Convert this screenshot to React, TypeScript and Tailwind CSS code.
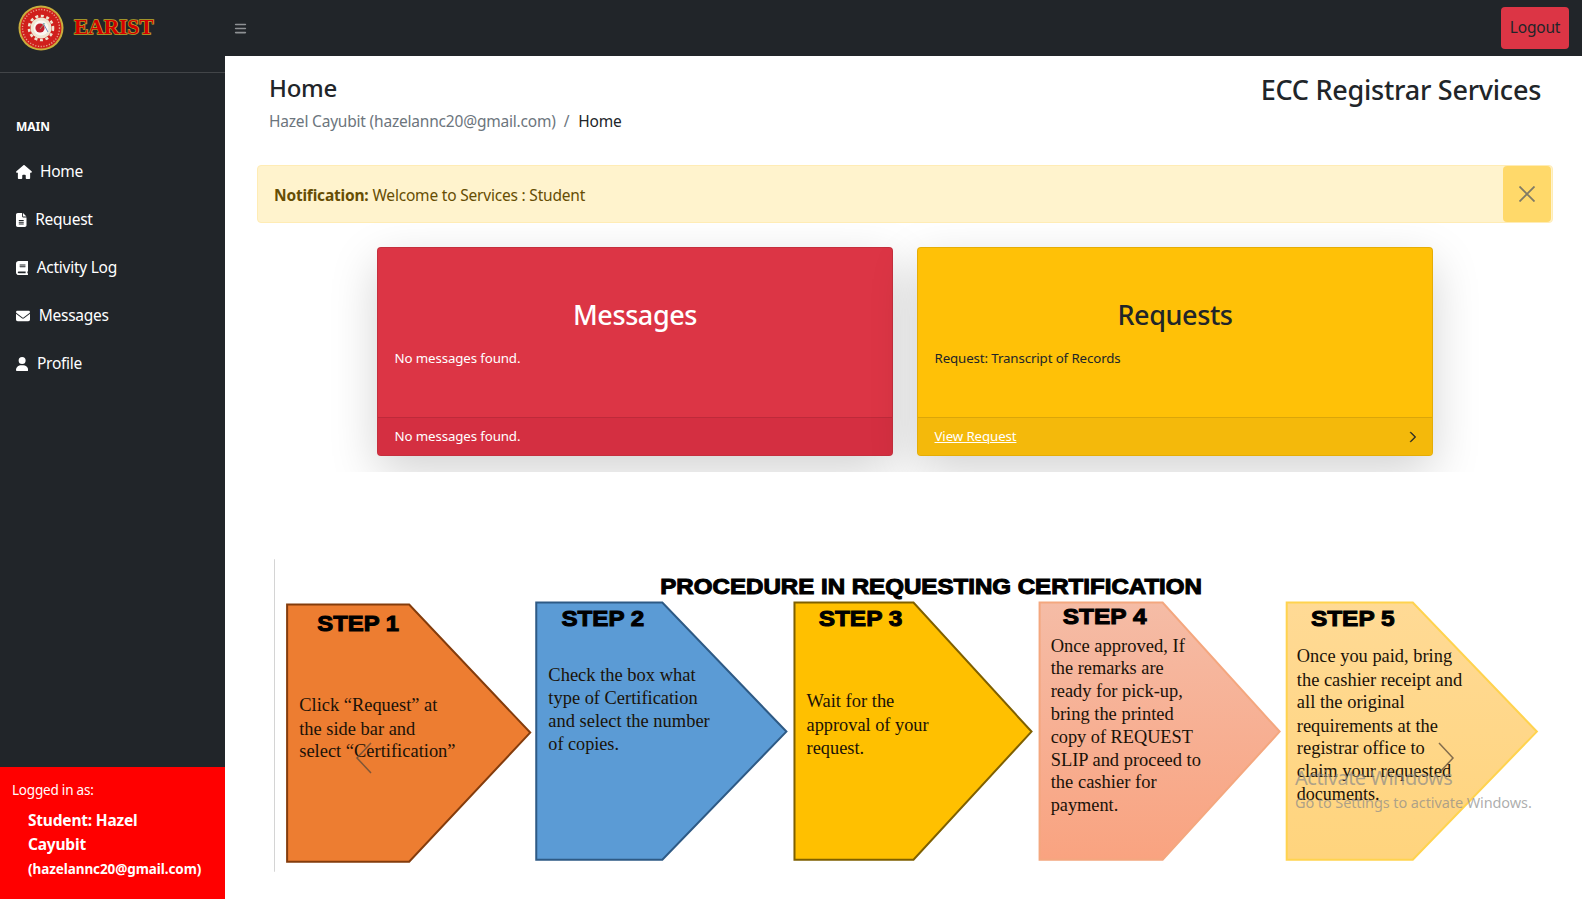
import { FaBars, FaBook, FaEnvelope, FaFileLines, FaHouse, FaUser } from "react-icons/fa6";
import { BsChevronRight } from "react-icons/bs";

const navItems = [
  { label: "Home", icon: FaHouse, iconClass: "w-4 h-3.5", gap: "gap-2" },
  { label: "Request", icon: FaFileLines, iconClass: "w-[10.5px] h-3.5", gap: "gap-[8.7px]" },
  { label: "Activity Log", icon: FaBook, iconClass: "w-[12.25px] h-3.5", gap: "gap-[8.4px]" },
  { label: "Messages", icon: FaEnvelope, iconClass: "w-3.5 h-3.5", gap: "gap-[8.7px]" },
  { label: "Profile", icon: FaUser, iconClass: "w-[12.25px] h-3.5", gap: "gap-[8.7px]" },
];

type Line = [string, number, number, number];

const steps = [
  {
    points: "284,600 405,600 525,727 405,855 284,855",
    fill: "#ed7d31",
    stroke: "#843c0c",
    title: ["STEP 1", 314, 626, 81],
    lines: [
      ["Click “Request” at", 296, 706, 137],
      ["the side bar and", 296, 729, 115],
      ["select “Certification”", 296, 751, 155],
    ] as Line[],
  },
  {
    points: "531,598 656,598 779,726 656,853 531,853",
    fill: "#5b9bd5",
    stroke: "#2e5a85",
    title: ["STEP 2", 556, 621, 82],
    lines: [
      ["Check the box what", 543, 676, 146],
      ["type of Certification", 543, 699, 148],
      ["and select the number", 543, 721, 160],
      ["of copies.", 543, 744, 70],
    ] as Line[],
  },
  {
    points: "787,598 905,598 1022,726 905,853 787,853",
    fill: "#ffc000",
    stroke: "#7f6000",
    title: ["STEP 3", 811, 621, 83],
    lines: [
      ["Wait for the", 799, 702, 87],
      ["approval of your", 799, 725, 121],
      ["request.", 799, 748, 57],
    ] as Line[],
  },
  {
    points: "1030,598 1152,598 1268,726 1152,853 1030,853",
    fill: "url(#step4)",
    stroke: "#f4a77f",
    title: ["STEP 4", 1053, 619, 83],
    lines: [
      ["Once approved, If", 1041, 647, 133],
      ["the remarks are", 1041, 669, 112],
      ["ready for pick-up,", 1041, 692, 131],
      ["bring the printed", 1041, 714, 122],
      ["copy of REQUEST", 1041, 737, 141],
      ["SLIP and proceed to", 1041, 760, 149],
      ["the cashier for", 1041, 782, 105],
      ["payment.", 1041, 805, 67],
    ] as Line[],
  },
  {
    points: "1275,598 1400,598 1523,726 1400,853 1275,853",
    fill: "url(#step5)",
    stroke: "#ffd34f",
    title: ["STEP 5", 1299, 621, 83],
    lines: [
      ["Once you paid, bring", 1285, 657, 154],
      ["the cashier receipt and", 1285, 681, 164],
      ["all the original", 1285, 703, 107],
      ["requirements at the", 1285, 726, 140],
      ["registrar office to", 1285, 748, 127],
      ["claim your requested", 1285, 771, 153],
      ["documents.", 1285, 794, 82],
    ] as Line[],
  },
];

function Logo() {
  return (
    <svg width="48" height="48" viewBox="0 0 48 48">
      <circle cx="24" cy="24" r="22.5" fill="#c8ae3c" />
      <circle cx="24" cy="24" r="20.5" fill="#d0201c" />
      <circle cx="24" cy="24" r="18.5" fill="none" stroke="#e8a08c" strokeWidth="1.4" strokeDasharray="1.2 1.6" />
      <circle cx="24" cy="24" r="12" fill="none" stroke="#efe6d2" strokeWidth="2.6" strokeDasharray="3 2.6" />
      <circle cx="24" cy="24" r="10.5" fill="#efe6d2" />
      <circle cx="24" cy="24" r="7.5" fill="#fbf8f2" />
      <circle cx="23" cy="24" r="4.6" fill="#c4202c" />
      <path d="M26 19 L31 28" stroke="#6f8fc0" strokeWidth="1" />
      <path d="M28 19 L23 25" stroke="#8cc08c" strokeWidth="0.8" />
    </svg>
  );
}

function ProcedureImage() {
  return (
    <svg width="1280" height="320" viewBox="271 555 1269 317" className="block">
      <defs>
        <linearGradient id="step4" x1="0" y1="0" x2="0" y2="1">
          <stop offset="0" stopColor="#f5bca6" />
          <stop offset="1" stopColor="#f9a380" />
        </linearGradient>
        <linearGradient id="step5" x1="0" y1="0" x2="0" y2="1">
          <stop offset="0" stopColor="#ffda95" />
          <stop offset="1" stopColor="#ffd47d" />
        </linearGradient>
      </defs>
      <line x1="271" y1="555" x2="271" y2="865" stroke="#d4d4d4" strokeWidth="2" />
      <text
        x="654"
        y="590"
        textLength="537"
        lengthAdjust="spacingAndGlyphs"
        fontFamily="Liberation Sans, sans-serif"
        fontWeight="700"
        fontSize="21"
        fill="#000"
        stroke="#000"
        strokeWidth="1"
      >
        PROCEDURE IN REQUESTING CERTIFICATION
      </text>
      {steps.map((step) => (
        <g key={step.title[0] as string}>
          <polygon points={step.points} fill={step.fill} stroke={step.stroke} strokeWidth="2" />
          <text
            x={step.title[1] as number}
            y={step.title[2] as number}
            textLength={step.title[3] as number}
            lengthAdjust="spacingAndGlyphs"
            fontFamily="Liberation Sans, sans-serif"
            fontWeight="700"
            fontSize="22"
            fill="#000"
            stroke="#000"
            strokeWidth="1"
          >
            {step.title[0]}
          </text>
          {step.lines.map(([text, x, y, w]) => (
            <text
              key={text}
              x={x}
              y={y}
              textLength={w}
              lengthAdjust="spacingAndGlyphs"
              fontFamily="Liberation Serif, serif"
              fontSize="19"
              fill="#1a1208"
            >
              {text}
            </text>
          ))}
        </g>
      ))}
    </svg>
  );
}

function StatCard({ tone, title, body, footer }: { tone: "red" | "yellow"; title: string; body: string; footer: React.ReactNode }) {
  const red = tone === "red";
  return (
    <div className={`w-[516px] h-[209px] rounded border border-black/10 shadow-[0_16px_48px_rgba(0,0,0,0.175)] flex flex-col overflow-hidden ${red ? "bg-[#dc3545] text-white" : "bg-[#ffc107] text-[#212529]"}`}>
      <div className="flex-1 pl-[17px] pr-4 pt-[51px]">
        <h3 className="text-center text-[27px] leading-[32px] font-medium tracking-[-0.4px]">{title}</h3>
        <p className="mt-[16px] text-[13.3px] leading-[22px] tracking-[-0.12px]">{body}</p>
      </div>
      <div className={`h-[38px] pt-px flex items-center justify-between pl-[17px] pr-[13px] text-[13.3px] border-t border-black/10 tracking-[-0.12px] ${red ? "bg-[#d42f41]" : "bg-[#f4b90b]"}`}>
        {footer}
      </div>
    </div>
  );
}

export default function App() {
  return (
    <div className="h-screen overflow-hidden flex flex-col bg-white text-[#212529] font-['Noto_Sans','Open_Sans',sans-serif]">
      <header className="h-14 shrink-0 bg-[#212529] flex items-center">
        <div className="w-[225px] shrink-0 flex items-center pl-[17px] gap-[9px]">
          <Logo />
          <span className="font-['Liberation_Serif',serif] font-bold text-[21.5px] leading-none tracking-[-0.1px] text-[#d40000] [-webkit-text-stroke:1.4px_#b8a82a] [paint-order:stroke_fill]">
            EARIST
          </span>
        </div>
        <FaBars size={13} className="ml-[9px] text-[#8e9194]" />
        <button className="ml-auto mr-[13px] w-[68px] h-[42px] rounded bg-[#dc3545] text-[15.5px] text-[#212529] tracking-[-0.2px]">Logout</button>
      </header>

      <div className="flex-1 flex min-h-0">
        <aside className="w-[225px] shrink-0 bg-[#212529] text-white flex flex-col">
          <div className="mt-4 h-px bg-white/15" />
          <div className="mt-[46px] px-4 text-xs font-bold leading-4">MAIN</div>
          <nav className="mt-[13px] flex flex-col">
            {navItems.map((item) => (
              <a key={item.label} className={`h-12 px-4 flex items-center text-[15.5px] tracking-[-0.25px] ${item.gap}`}>
                <item.icon className={item.iconClass} />
                {item.label}
              </a>
            ))}
          </nav>
          <div className="mt-auto h-[132px] bg-[#ff0000] pl-3 pr-2 pt-[11px]">
            <div className="text-[13.5px] leading-6 tracking-[-0.2px]">Logged in as:</div>
            <div className="mt-[6px] pl-4 font-bold text-[15.5px] leading-6 tracking-[-0.2px]">
              Student: Hazel
              <br />
              Cayubit
              <br />
              <span className="text-[13.5px] tracking-[-0.08px]">(hazelannc20@gmail.com)</span>
            </div>
          </div>
        </aside>

        <main className="flex-1 min-w-0 pl-8 pr-[29px]">
          <div className="flex justify-between pl-3 pr-[12px] pt-[17px]">
            <div>
              <h1 className="text-[24px] leading-[29px] font-medium tracking-[-0.3px]">Home</h1>
              <div className="mt-[7px] text-[15.5px] leading-6 tracking-[-0.2px]">
                <span className="text-[#6c757d]">Hazel Cayubit (hazelannc20@gmail.com)</span>
                <span className="text-[#6c757d] px-2">/</span>
                <span className="ml-px">Home</span>
              </div>
            </div>
            <h2 className="text-[27px] leading-[34px] font-medium tracking-[-0.25px]">ECC Registrar Services</h2>
          </div>

          <div className="mt-8 h-[58px] rounded border border-[#ffecb5] bg-[#fff3cd] text-[#664d03] flex items-center pl-4 pr-px text-[15.5px] tracking-[-0.2px]">
            <div className="pt-[3px]">
              <strong className="font-bold">Notification:</strong>
              <span className="ml-1">Welcome to Services : Student</span>
            </div>
            <button className="ml-auto w-12 h-[56px] rounded bg-[#ffd96a] flex items-center justify-center" aria-label="Close">
              <svg width="16" height="16" viewBox="0 0 16 16" stroke="#7f7a66" strokeWidth="1.8">
                <path d="M0.5 0.5 L15.5 15.5 M15.5 0.5 L0.5 15.5" />
              </svg>
            </button>
          </div>

          <section className="h-[249px] overflow-hidden flex justify-center gap-[24px] pt-6 pr-px">
            <StatCard tone="red" title="Messages" body="No messages found." footer={<span>No messages found.</span>} />
            <StatCard
              tone="yellow"
              title="Requests"
              body="Request: Transcript of Records"
              footer={
                <>
                  <a className="underline text-white">View Request</a>
                  <BsChevronRight size={12} strokeWidth={1} />
                </>
              }
            />
          </section>

          <div className="relative mt-[87px] ml-[17px] w-[1280px]">
            <ProcedureImage />
            <svg width="20" height="36" viewBox="0 0 20 36" fill="none" stroke="#5a4a3a" strokeOpacity="0.75" strokeWidth="1.5" className="absolute left-[80px] top-[182px]">
              <path d="M17 2 L3 17 L17 32" />
            </svg>
            <svg width="20" height="36" viewBox="0 0 20 36" fill="none" stroke="#5a4a3a" strokeOpacity="0.75" strokeWidth="1.5" className="absolute left-[1162px] top-[182px]">
              <path d="M3 2 L17 17 L3 32" />
            </svg>
            <div className="absolute left-[1021px] top-[205px] whitespace-nowrap text-[#8a8a8a]/70">
              <div className="text-[20px] leading-7 tracking-[-0.5px]">Activate Windows</div>
              <div className="text-[14.5px] leading-[20px] tracking-[-0.1px]">Go to Settings to activate Windows.</div>
            </div>
          </div>
        </main>
      </div>
    </div>
  );
}
